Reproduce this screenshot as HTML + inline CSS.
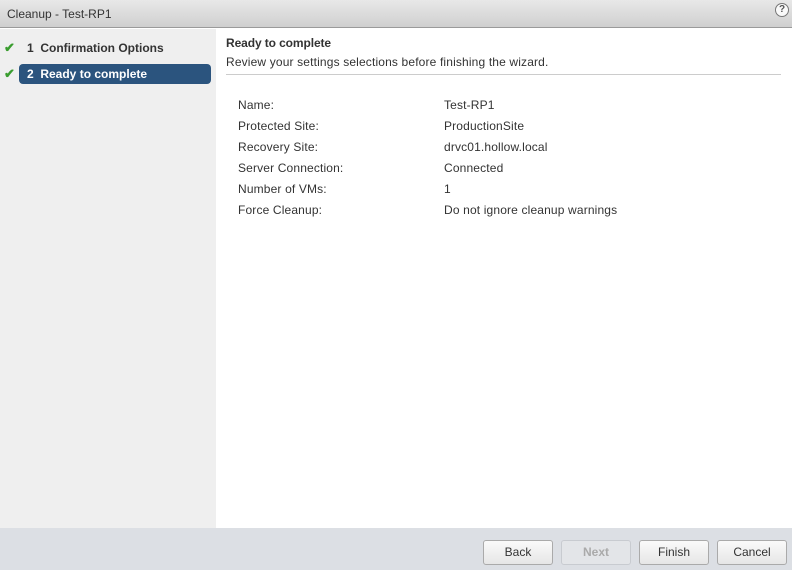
<!DOCTYPE html>
<html><head><style>
*{margin:0;padding:0;box-sizing:border-box}
body{width:792px;height:570px;overflow:hidden;font-family:"Liberation Sans",Arial,sans-serif;font-size:12px;color:#333;background:#fff;position:relative}
.title{position:absolute;left:0;top:0;width:792px;height:28px;background:linear-gradient(#e8e8e8,#cfcfcf);border-bottom:1px solid #9a9a9a}
.title span{position:absolute;left:7px;top:7px;font-size:12px;color:#333}
.help{position:absolute;left:775px;top:3px;width:14px;height:14px;border-radius:50%;border:1px solid #777;background:#fafafa;font-size:10px;font-weight:bold;text-align:center;line-height:12px;color:#555}
.side{position:absolute;left:0;top:29px;width:216px;height:499px;background:#efefef}
.step{position:absolute;left:0;height:20px;width:216px}
.chk{position:absolute;left:4px;top:2px;color:#3a9d2f;font-weight:bold;font-size:13px}
.s1 .t{position:absolute;left:27px;top:3px;font-weight:bold;color:#333}
.s2 .box{position:absolute;left:19px;top:0;width:192px;height:20px;background:#2b547e;border-radius:4px}
.s2 .t{position:absolute;left:27px;top:3px;font-weight:bold;color:#fff}
.main{position:absolute;left:226px;top:36px}
h1{font-size:12px;font-weight:bold;color:#333;letter-spacing:-0.1px}
.sub{margin-top:5px;letter-spacing:0.15px}
.hr{position:absolute;left:226px;top:74px;width:555px;height:1px;background:#ccc}
.row{position:absolute;left:238px;letter-spacing:0.15px}
.row b{font-weight:normal;position:absolute;left:206px;white-space:nowrap}
.foot{position:absolute;left:0;top:528px;width:792px;height:42px;background:#dcdfe4}
.btn{position:absolute;top:12px;height:25px;width:70px;border:1px solid #aaa;border-radius:3px;background:linear-gradient(#fafafa,#e6e6e6);text-align:center;line-height:23px;color:#333}
.dis{color:#aaa;border-color:#c8cbd0;background:#e3e5e8;font-weight:bold}
</style></head><body>
<div class="title"><span>Cleanup - Test-RP1</span><div class="help">?</div></div>
<div class="side">
<div class="step s1" style="top:9px"><span class="chk">✔</span><span class="t">1&nbsp; Confirmation Options</span></div>
<div class="step s2" style="top:35px"><span class="chk">✔</span><div class="box"></div><span class="t">2&nbsp; Ready to complete</span></div>
</div>
<div class="main"><h1>Ready to complete</h1><div class="sub">Review your settings selections before finishing the wizard.</div></div>
<div class="hr"></div>
<div class="row" style="top:98px">Name:<b>Test-RP1</b></div>
<div class="row" style="top:119px">Protected Site:<b>ProductionSite</b></div>
<div class="row" style="top:140px">Recovery Site:<b>drvc01.hollow.local</b></div>
<div class="row" style="top:161px">Server Connection:<b>Connected</b></div>
<div class="row" style="top:182px">Number of VMs:<b>1</b></div>
<div class="row" style="top:203px">Force Cleanup:<b>Do not ignore cleanup warnings</b></div>
<div class="foot">
<div class="btn" style="left:483px">Back</div>
<div class="btn dis" style="left:561px">Next</div>
<div class="btn" style="left:639px">Finish</div>
<div class="btn" style="left:717px">Cancel</div>
</div>
</body></html>
